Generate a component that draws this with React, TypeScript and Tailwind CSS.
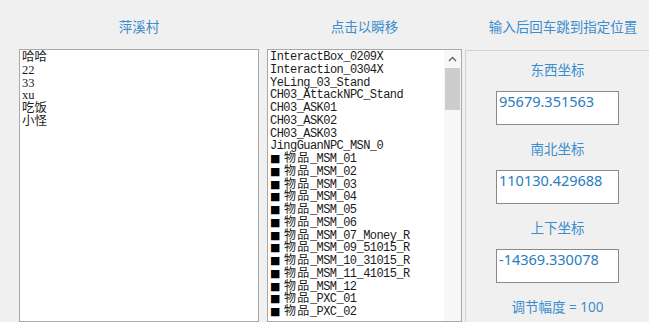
import React from 'react';

const places = ['哈哈', '22', '33', 'xu', '吃饭', '小怪'];

const targets = [
  'InteractBox_0209X',
  'Interaction_0304X',
  'YeLing_03_Stand',
  'CH03_AttackNPC_Stand',
  'CH03_ASK01',
  'CH03_ASK02',
  'CH03_ASK03',
  'JingGuanNPC_MSN_0',
  '■物品_MSM_01',
  '■物品_MSM_02',
  '■物品_MSM_03',
  '■物品_MSM_04',
  '■物品_MSM_05',
  '■物品_MSM_06',
  '■物品_MSM_07_Money_R',
  '■物品_MSM_09_51015_R',
  '■物品_MSM_10_31015_R',
  '■物品_MSM_11_41015_R',
  '■物品_MSM_12',
  '■物品_PXC_01',
  '■物品_PXC_02',
];

// wide chars take two columns, like NSimSun
const Row = ({ text }: { text: string }) => (
  <div className="whitespace-nowrap h-[12.75px]">
    {Array.from(text).map((c, i) =>
      c === '■' ? (
        <span key={i} className="inline-block w-[13.3px] text-[11px] tracking-normal font-['DejaVu_Sans',sans-serif] text-black">{c}</span>
      ) : c.charCodeAt(0) > 255 ? (
        <span key={i} className="inline-block w-[13.3px] text-center text-[12px] tracking-normal">{c}</span>
      ) : (
        <span key={i}>{c}</span>
      )
    )}
  </div>
);

const coords = [
  { label: '东西坐标', value: '95679.351563' },
  { label: '南北坐标', value: '110130.429688' },
  { label: '上下坐标', value: '-14369.330078' },
];

export default function App() {
  const head = "h-[52px] pt-[3px] flex items-center justify-center text-[13.5px] text-[#3b8dce] font-['Noto_Sans_CJK_SC',sans-serif]";
  return (
    <div className="w-[649px] h-[322px] overflow-hidden bg-[#f0f0f0] flex">
      <div className="ml-[19px] w-[240px] shrink-0 flex flex-col">
        <div className={head}>萍溪村</div>
        <div className="h-[290px] bg-white border border-[#a9a9a9] pl-[2px] pt-[1px] text-[12.5px] leading-[12.75px] text-[#222] font-['Liberation_Serif','Noto_Sans_CJK_SC',serif]">
          {places.map((p) => (
            <div key={p} className="h-[12.75px]">{p}</div>
          ))}
        </div>
      </div>

      <div className="ml-[8px] w-[195px] shrink-0 flex flex-col">
        <div className={head}>点击以瞬移</div>
        <div className="h-[290px] bg-white border border-[#a9a9a9] flex overflow-hidden">
          <div className="flex-1 pl-[2px] pt-[1px] text-[12px] tracking-[-0.55px] leading-[12.75px] text-[#1a1a1a] font-['Liberation_Mono','Noto_Sans_CJK_SC',monospace]">
            {targets.map((t) => (
              <Row key={t} text={t} />
            ))}
          </div>
          <div className="w-[17px] bg-[#f7f7f7] flex flex-col">
            <div className="h-[18px] flex items-center justify-center">
              <svg width="9" height="6" viewBox="0 0 9 6">
                <polyline points="1,5 4.5,1.5 8,5" fill="none" stroke="#606060" strokeWidth="1.3" />
              </svg>
            </div>
            <div className="h-[42px] mx-[1px] bg-[#cdcdcd]" />
          </div>
        </div>
      </div>

      <div className="ml-[3px] w-[196px] shrink-0 flex flex-col">
        <div className={head}>输入后回车跳到指定位置</div>
        <div className="mt-[1px] h-[290px] border-l border-t border-[#d2d2d2] pt-[10px] pl-[30px]">
          <div className="w-[123px] flex flex-col font-['Noto_Sans','Noto_Sans_CJK_SC',sans-serif]">
            {coords.map((c, i) => (
              <React.Fragment key={c.label}>
                <div className={`h-[18px] leading-[18px] text-center text-[13.5px] text-[#3b8dce] ${i ? 'mt-[15px]' : ''}`}>{c.label}</div>
                <div className="mt-[12px] h-[34px] bg-white border border-[#8a8a8a] pl-[2px] text-[14.5px] leading-[19px] text-[#2a7cc0]">
                  {c.value}
                </div>
              </React.Fragment>
            ))}
            <div className="mt-[15px] h-[18px] leading-[18px] text-center text-[13.5px] text-[#3b8dce]">调节幅度 = 100</div>
          </div>
        </div>
      </div>
    </div>
  );
}
